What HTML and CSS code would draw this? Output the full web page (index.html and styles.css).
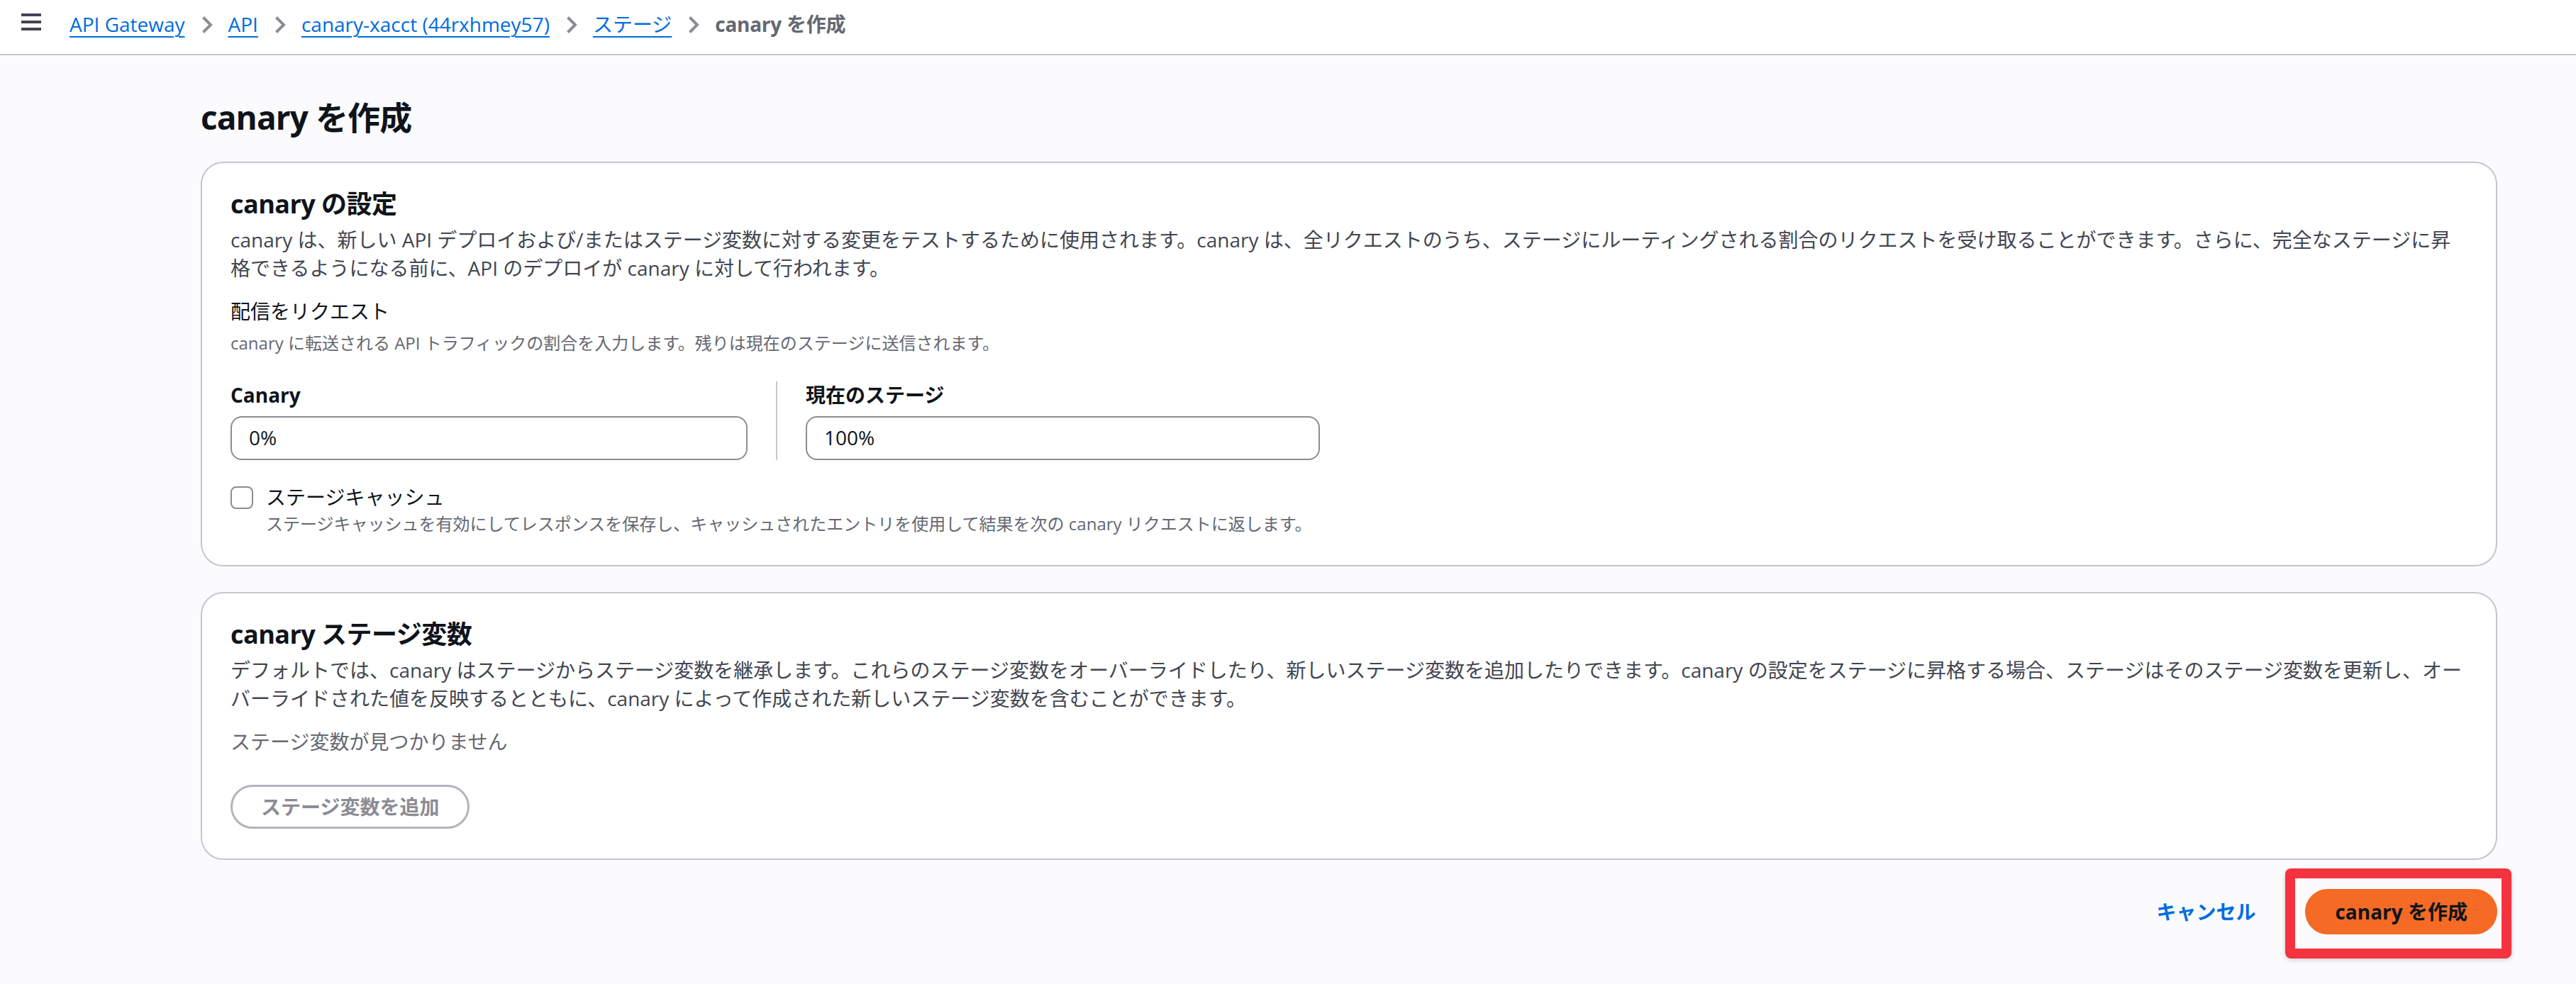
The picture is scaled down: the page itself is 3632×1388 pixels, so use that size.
FILE: index.html
```html
<!DOCTYPE html>
<html lang="ja">
<head>
<meta charset="utf-8">
<title>canary を作成</title>
<link rel="stylesheet" href="styles.css">
</head>
<body>

<header class="top-bar">
  <button class="menu-btn" type="button" aria-label="メニュー">
    <svg width="28" height="24" viewBox="0 0 28 24">
      <rect x="0" y="0" width="28" height="4"></rect>
      <rect x="0" y="10" width="28" height="4"></rect>
      <rect x="0" y="20" width="28" height="4"></rect>
    </svg>
  </button>
  <nav class="crumbs">
    <a href="#">API Gateway</a>
    <svg class="crumb-sep" width="16" height="26" viewBox="0 0 16 26"><path d="M2.5 2.5 L13 13 L2.5 23.5"></path></svg>
    <a href="#">API</a>
    <svg class="crumb-sep" width="16" height="26" viewBox="0 0 16 26"><path d="M2.5 2.5 L13 13 L2.5 23.5"></path></svg>
    <a href="#">canary-xacct (44rxhmey57)</a>
    <svg class="crumb-sep" width="16" height="26" viewBox="0 0 16 26"><path d="M2.5 2.5 L13 13 L2.5 23.5"></path></svg>
    <a href="#">ステージ</a>
    <svg class="crumb-sep" width="16" height="26" viewBox="0 0 16 26"><path d="M2.5 2.5 L13 13 L2.5 23.5"></path></svg>
    <span class="crumb-current">canary を作成</span>
  </nav>
</header>

<main class="page">
  <h1 class="page-title">canary を作成</h1>

  <section class="panel">
    <h2 class="panel-title">canary の設定</h2>
    <p class="panel-desc">canary は、新しい API デプロイおよび/またはステージ変数に対する変更をテストするために使用されます。canary は、全リクエストのうち、ステージにルーティングされる割合のリクエストを受け取ることができます。さらに、完全なステージに昇格できるようになる前に、API のデプロイが canary に対して行われます。</p>

    <div class="field-head">
      <div class="field-label">配信をリクエスト</div>
      <div class="field-hint">canary に転送される API トラフィックの割合を入力します。残りは現在のステージに送信されます。</div>
    </div>

    <div class="split">
      <div class="split-col">
        <label class="input-label" for="canary-pct">Canary</label>
        <input class="text-input" id="canary-pct" type="text" value="0%">
      </div>
      <div class="split-divider"></div>
      <div class="split-col">
        <label class="input-label" for="stage-pct">現在のステージ</label>
        <input class="text-input" id="stage-pct" type="text" value="100%">
      </div>
    </div>

    <label class="check">
      <span class="check-box"></span>
      <span class="check-text">
        <span class="check-label">ステージキャッシュ</span>
        <span class="check-hint">ステージキャッシュを有効にしてレスポンスを保存し、キャッシュされたエントリを使用して結果を次の canary リクエストに返します。</span>
      </span>
    </label>
  </section>

  <section class="panel">
    <h2 class="panel-title">canary ステージ変数</h2>
    <p class="panel-desc">デフォルトでは、canary はステージからステージ変数を継承します。これらのステージ変数をオーバーライドしたり、新しいステージ変数を追加したりできます。canary の設定をステージに昇格する場合、ステージはそのステージ変数を更新し、オーバーライドされた値を反映するとともに、canary によって作成された新しいステージ変数を含むことができます。</p>
    <p class="empty-note">ステージ変数が見つかりません</p>
    <button class="btn btn-normal" type="button" disabled>ステージ変数を追加</button>
  </section>

  <div class="actions">
    <a class="link-btn" href="#">キャンセル</a>
    <div class="highlight">
      <button class="btn btn-primary" type="button">canary を作成</button>
      <div class="highlight-frame"></div>
    </div>
  </div>
</main>

</body>
</html>
```

FILE: styles.css
```css
*, *:before, *:after {
  box-sizing: border-box;
}

body {
  margin: 0;
  background: #fbfbfd;
  color: #0f141a;
  font: 28px/40px 'Open Sans', 'Noto Sans CJK JP', sans-serif;
}

/* top bar */
.top-bar {
  display: flex;
  align-items: flex-start;
  height: 78px;
  padding: 14px 0 0 30px;
  background: #fff;
  border-bottom: 2px solid #c6c6cd;
}
.menu-btn {
  margin: 5px 40px 0 0;
  padding: 0;
  border: 0;
  background: none;
  line-height: 0;
}
.menu-btn svg {
  fill: #424650;
}
.crumbs {
  display: flex;
  align-items: center;
  height: 40px;
  white-space: nowrap;
}
.crumbs a {
  color: #006ce0;
  text-decoration: underline;
  text-decoration-thickness: 2px;
  text-underline-offset: 6px;
}
.crumb-sep {
  margin: 2px 22px 0 23px;
  fill: none;
  stroke: #8c8c94;
  stroke-width: 4;
}
.crumb-current {
  color: #656871;
  font-weight: 700;
  letter-spacing: -0.01em;
}

/* page */
.page {
  padding: 57px 111px 60px 283px;
}
.page-title {
  margin: 0 0 33px;
  font-size: 46px;
  line-height: 60px;
  font-weight: 700;
  letter-spacing: -0.02em;
}

.panel {
  margin-bottom: 36px;
  padding: 36px 40px 42px;
  background: #fff;
  border: 2px solid #c6c6cd;
  border-radius: 32px;
}
.panel-title {
  margin: 0;
  font-size: 36px;
  line-height: 44px;
  font-weight: 700;
  letter-spacing: -0.015em;
}
.panel-desc {
  margin: 8px 0 0;
  color: #424650;
}

.field-head {
  margin-top: 21px;
}
.field-label {
  color: #0f141a;
}
.field-hint {
  margin-top: 9px;
  font-size: 24px;
  line-height: 32px;
  color: #656871;
}

.split {
  display: flex;
  margin-top: 37px;
}
.split-col {
  display: flex;
  flex-direction: column;
  width: 729px;
}
.split-col + .split-divider + .split-col {
  width: 725px;
}
.split-divider {
  width: 2px;
  margin: 1px 40px 0;
  background: #c6c6cd;
}
.input-label {
  font-weight: 700;
  margin-bottom: 10px;
}
.text-input {
  height: 62px;
  padding: 8px 24px 10px;
  border: 2px solid #8c8c94;
  border-radius: 16px;
  font: inherit;
  color: #0f141a;
  background: #fff;
}

.check {
  display: flex;
  align-items: flex-start;
  margin-top: 32px;
}
.check-box {
  flex: none;
  width: 32px;
  height: 32px;
  margin: 5px 18px 0 0;
  border: 2px solid #8c8c94;
  border-radius: 8px;
  background: #fff;
}
.check-text {
  display: flex;
  flex-direction: column;
}
.check-label {
  color: #0f141a;
}
.check-hint {
  margin-top: 2px;
  font-size: 24px;
  line-height: 32px;
  color: #656871;
}

.empty-note {
  margin: 21px 0 0;
  color: #656871;
}

/* buttons */
.btn {
  font: inherit;
  font-weight: 700;
  border-radius: 40px;
  white-space: nowrap;
}
.btn-normal {
  margin-top: 41px;
  height: 62px;
  padding: 8px 40px;
  border: 3px solid #b4b4bb;
  background: #fff;
  color: #8c8c94;
}
.btn-primary {
  height: 64px;
  padding: 8px 38px;
  border: 4px solid #f56a24;
  background: #f56a24;
  color: #0f141a;
}

.actions {
  display: flex;
  justify-content: flex-end;
  align-items: center;
  margin-top: 41px;
}
.link-btn {
  margin-right: 70px;
  color: #006ce0;
  font-weight: 700;
  text-decoration: none;
}
.highlight {
  position: relative;
  line-height: 0;
}
.highlight-frame {
  position: absolute;
  top: -29px;
  right: -20px;
  bottom: -34px;
  left: -28px;
  border: 14px solid #f4333f;
  border-radius: 8px;
  box-shadow: 0 2px 6px rgba(0, 0, 0, 0.18);
  pointer-events: none;
}
```
